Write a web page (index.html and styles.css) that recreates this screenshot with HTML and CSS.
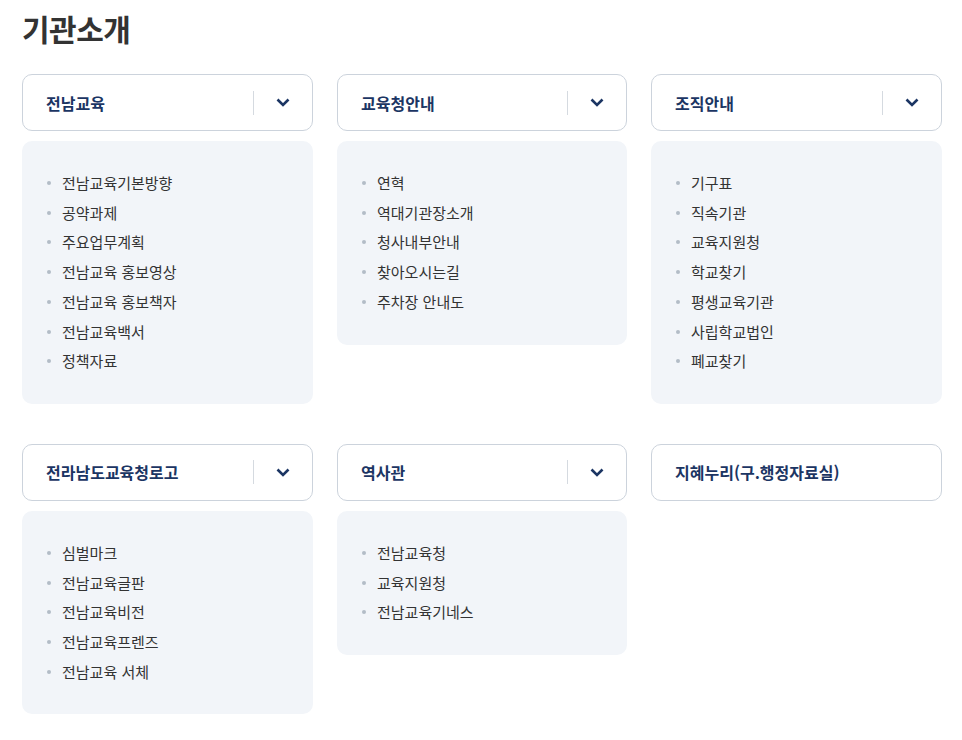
FILE: index.html
```html
<!DOCTYPE html>
<html lang="ko">
<head>
  <meta charset="UTF-8">
  <title>기관소개</title>
  <link rel="stylesheet" href="styles.css">
</head>
<body>
  <h1 class="page-title">기관소개</h1>

  <div class="menu-grid">
    <div class="menu-col">
      <div class="menu-head">
        <span class="menu-name">전남교육</span>
        <span class="menu-toggle">
          <svg width="14" height="9" viewBox="0 0 14 9"><path d="M1.5 1.5 L7 7 L12.5 1.5" fill="none" stroke="#1b3563" stroke-width="2.6"/></svg>
        </span>
      </div>
      <ul class="menu-list">
        <li>전남교육기본방향</li>
        <li>공약과제</li>
        <li>주요업무계획</li>
        <li>전남교육 홍보영상</li>
        <li>전남교육 홍보책자</li>
        <li>전남교육백서</li>
        <li>정책자료</li>
      </ul>
    </div>

    <div class="menu-col">
      <div class="menu-head">
        <span class="menu-name">교육청안내</span>
        <span class="menu-toggle">
          <svg width="14" height="9" viewBox="0 0 14 9"><path d="M1.5 1.5 L7 7 L12.5 1.5" fill="none" stroke="#1b3563" stroke-width="2.6"/></svg>
        </span>
      </div>
      <ul class="menu-list">
        <li>연혁</li>
        <li>역대기관장소개</li>
        <li>청사내부안내</li>
        <li>찾아오시는길</li>
        <li>주차장 안내도</li>
      </ul>
    </div>

    <div class="menu-col">
      <div class="menu-head">
        <span class="menu-name">조직안내</span>
        <span class="menu-toggle">
          <svg width="14" height="9" viewBox="0 0 14 9"><path d="M1.5 1.5 L7 7 L12.5 1.5" fill="none" stroke="#1b3563" stroke-width="2.6"/></svg>
        </span>
      </div>
      <ul class="menu-list">
        <li>기구표</li>
        <li>직속기관</li>
        <li>교육지원청</li>
        <li>학교찾기</li>
        <li>평생교육기관</li>
        <li>사립학교법인</li>
        <li>폐교찾기</li>
      </ul>
    </div>

    <div class="menu-col">
      <div class="menu-head">
        <span class="menu-name">전라남도교육청로고</span>
        <span class="menu-toggle">
          <svg width="14" height="9" viewBox="0 0 14 9"><path d="M1.5 1.5 L7 7 L12.5 1.5" fill="none" stroke="#1b3563" stroke-width="2.6"/></svg>
        </span>
      </div>
      <ul class="menu-list">
        <li>심벌마크</li>
        <li>전남교육글판</li>
        <li>전남교육비전</li>
        <li>전남교육프렌즈</li>
        <li>전남교육 서체</li>
      </ul>
    </div>

    <div class="menu-col">
      <div class="menu-head">
        <span class="menu-name">역사관</span>
        <span class="menu-toggle">
          <svg width="14" height="9" viewBox="0 0 14 9"><path d="M1.5 1.5 L7 7 L12.5 1.5" fill="none" stroke="#1b3563" stroke-width="2.6"/></svg>
        </span>
      </div>
      <ul class="menu-list">
        <li>전남교육청</li>
        <li>교육지원청</li>
        <li>전남교육기네스</li>
      </ul>
    </div>

    <div class="menu-col">
      <div class="menu-head">
        <span class="menu-name">지혜누리(구.행정자료실)</span>
      </div>
    </div>
  </div>
</body>
</html>
```

FILE: styles.css
```css
body {
  margin: 0;
  padding: 0 20px 0 22px;
  background: #fff;
  font-family: "Noto Sans CJK KR", "Noto Sans", sans-serif;
  color: #333;
}
.page-title {
  margin: 0;
  padding-top: 8px;
  font-size: 30px;
  line-height: 40px;
  font-weight: 700;
  color: #333;
  letter-spacing: -0.5px;
}
.menu-grid {
  display: grid;
  grid-template-columns: 291px 290px 291px;
  column-gap: 24px;
  row-gap: 40px;
  margin-top: 26px;
  align-items: start;
}
.menu-head {
  display: flex;
  align-items: center;
  height: 57px;
  box-sizing: border-box;
  border: 1px solid #ccd3dc;
  border-radius: 10px;
  padding: 0 16px 0 23px;
}
.menu-name {
  flex: 1;
  font-size: 16px;
  font-weight: 700;
  color: #1b3563;
}
.menu-toggle {
  display: flex;
  align-items: center;
  justify-content: center;
  width: 42px;
  height: 24px;
  border-left: 1px solid #d5dae0;
}
.menu-toggle svg {
  display: block;
  margin-left: 16px;
}
.menu-list {
  list-style: none;
  margin: 10px 0 0;
  padding: 27px 20px 28px 40px;
  background: #f2f5f9;
  border-radius: 10px;
}
.menu-list li {
  position: relative;
  font-size: 15px;
  line-height: 29.7px;
  color: #333;
}
.menu-list li::before {
  content: "";
  position: absolute;
  left: -15px;
  top: 13px;
  width: 4px;
  height: 4px;
  border-radius: 50%;
  background: #b3bcc7;
}
```
